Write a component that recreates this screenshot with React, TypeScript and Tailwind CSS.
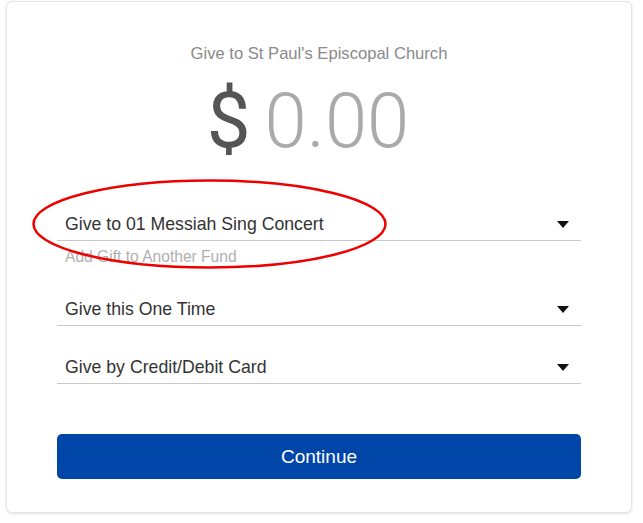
import React from "react";

function Caret() {
  return (
    <svg width="12" height="7" viewBox="0 0 12 7" className="shrink-0">
      <path d="M0 0 L12 0 L6 7 Z" fill="#111" />
    </svg>
  );
}

function Field({ label }: { label: string }) {
  return (
    <div className="flex items-center justify-between border-b border-[#c8c8c8] pb-[4px] pl-[8px] pr-[12px]">
      <span className="text-[17.7px] leading-[24px] text-[#333]">{label}</span>
      <Caret />
    </div>
  );
}

export default function App() {
  return (
    <div
      className="relative w-[643px] h-[523px] bg-white overflow-hidden"
      style={{ fontFamily: '"Liberation Sans", Arial, sans-serif' }}
    >
      <div className="ml-[6px] mt-[1px] w-[626px] h-[512px] rounded-[6px] border border-[#e4e4e4] bg-white shadow-[0_1px_3px_rgba(0,0,0,0.12)]">
        <div className="px-[50px]">
          <div className="mt-[42px] text-center text-[16.6px] leading-[20px] text-[#8a8a8a]">
            Give to St Paul's Episcopal Church
          </div>
          <div
            className="mt-[17px] flex h-[80px] items-center justify-center pr-[22px] leading-[80px]"
            style={{ fontFamily: 'Roboto, "Liberation Sans", sans-serif' }}
          >
            <span className="text-[78px] font-normal text-[#555]">$</span>
            <span className="ml-[14px] text-[76px] font-light text-[#aaa]">0.00</span>
          </div>
          <div className="mt-[51px]">
            <Field label="Give to 01 Messiah Sing Concert" />
          </div>
          <div className="mt-[8px] pl-[8px] text-[15.6px] leading-[16px] text-[#b0b0b0]">
            Add Gift to Another Fund
          </div>
          <div className="mt-[32px]">
            <Field label="Give this One Time" />
          </div>
          <div className="mt-[29px]">
            <Field label="Give by Credit/Debit Card" />
          </div>
          <button className="mt-[50px] flex h-[45px] w-full items-center justify-center rounded-[5px] bg-[#0046a8] pt-[2px] text-[19px] text-white">
            Continue
          </button>
        </div>
      </div>
      <svg
        className="pointer-events-none absolute left-0 top-0"
        width="643"
        height="523"
        viewBox="0 0 643 523"
      >
        <ellipse cx="209.5" cy="224" rx="176" ry="43.5" fill="none" stroke="#ee0000" strokeWidth="2.5" />
      </svg>
    </div>
  );
}
